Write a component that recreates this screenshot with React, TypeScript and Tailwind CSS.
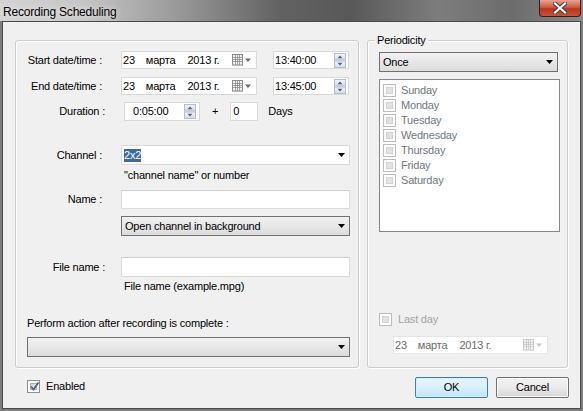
import React from "react";

const FONT = "font-['Liberation_Sans',Arial,sans-serif] text-[11px] tracking-[-0.2px]";

function Spinner() {
  return (
    <svg width="12" height="15" viewBox="0 0 12 15">
      <defs>
        <linearGradient id="spg" x1="0" y1="0" x2="0" y2="1">
          <stop offset="0" stopColor="#f4f7fb" />
          <stop offset="1" stopColor="#d3dbe6" />
        </linearGradient>
      </defs>
      <rect x="0.5" y="0.5" width="11" height="6.5" fill="url(#spg)" stroke="#b5bdca" />
      <rect x="0.5" y="8" width="11" height="6.5" fill="url(#spg)" stroke="#b5bdca" />
      <path d="M3.5 5.2 L6 2.6 L8.5 5.2Z" fill="#4f6386" />
      <path d="M3.5 9.8 L6 12.4 L8.5 9.8Z" fill="#4f6386" />
    </svg>
  );
}

function CalendarIcon({ disabled }: { disabled?: boolean }) {
  const c = disabled ? "#c8c8c8" : "#8c8c8c";
  const a = disabled ? "#c4c8ce" : "#5d6f8c";
  return (
    <svg width="20" height="12" viewBox="0 0 20 12">
      <rect x="0.5" y="0.5" width="10" height="10.5" fill="#f4f4f4" stroke={c} />
      <path d="M1 3.5H10M1 5.5H10M1 7.5H10M3.5 1V11M5.5 1V11M7.5 1V11" stroke={c} strokeWidth="0.8" />
      <rect x="1" y="11" width="10" height="1" fill={disabled ? "#e0e0e0" : "#b9b9b9"} />
      <path d="M13 4.5 L19 4.5 L16 8Z" fill={a} />
    </svg>
  );
}

function Arrow() {
  return (
    <svg width="7" height="4" viewBox="0 0 7 4">
      <path d="M0 0H7L3.5 4Z" fill="#000" />
    </svg>
  );
}

function DatePicker({ disabled, wide }: { disabled?: boolean; wide?: boolean }) {
  return (
    <div
      className={`h-[18px] ${wide ? "w-[155px]" : "w-[136px]"} bg-white border flex items-center ${
        disabled ? "border-[#e6e6e6] text-[#6d6d6d]" : "border-[#d9d9d9] text-black"
      }`}
    >
      <span className="pl-[1px]">23</span>
      <span className="ml-[11px]">марта</span>
      <span className="ml-[12px]">2013 г.</span>
      <span className="ml-auto mr-[4px] flex items-center">
        <CalendarIcon disabled={disabled} />
      </span>
    </div>
  );
}

function TimeBox({ value }: { value: string }) {
  return (
    <div className="h-[18px] w-[76px] bg-white border border-[#d9d9d9] flex items-center pl-[1px] pr-[2px]">
      <span>{value}</span>
      <span className="ml-auto flex">
        <Spinner />
      </span>
    </div>
  );
}

function TextBox({ h = 20, className = "" }: { h?: number; className?: string }) {
  return (
    <div
      className={`bg-white border border-[#dadada] border-t-[#cfcfcf] ${className}`}
      style={{ height: h }}
    />
  );
}

function Select({ text, className = "" }: { text?: string; className?: string }) {
  return (
    <div
      className={`h-[20px] border border-[#707070] bg-gradient-to-b from-[#f2f2f2] to-[#dcdcdc] flex items-center pl-[3px] pr-[4px] ${className}`}
    >
      <span>{text}</span>
      <span className="ml-auto flex">
        <Arrow />
      </span>
    </div>
  );
}

function CheckBox({ checked, disabled }: { checked?: boolean; disabled?: boolean }) {
  return (
    <div
      className={`w-[13px] h-[13px] border p-[2px] bg-white ${
        disabled ? "border-[#bdbdbd]" : "border-[#8e8f8f]"
      }`}
    >
      <div
        className={`w-full h-full relative ${
          disabled
            ? "bg-[#e2e2e2] border border-[#d4d4d4]"
            : "bg-gradient-to-br from-[#cfcfcf] to-[#f4f4f4] border border-[#b0b0b0]"
        }`}
      >
        {checked && (
          <svg className="absolute -left-[2px] -top-[3px]" width="11" height="11" viewBox="0 0 11 11">
            <path d="M2 5.5 L4.5 8.5 L9.5 1.5" stroke="#4a5e93" strokeWidth="1.8" fill="none" />
          </svg>
        )}
      </div>
    </div>
  );
}

function Label({ children }: { children: React.ReactNode }) {
  return <div className="w-[87px] text-right shrink-0 pr-[1px]">{children}</div>;
}

const days = ["Sunday", "Monday", "Tuesday", "Wednesday", "Thursday", "Friday", "Saturday"];

export default function App() {
  return (
    <div className={`w-[583px] h-[411px] flex flex-col bg-[#7d7d7d] ${FONT}`}>
      {/* Title bar */}
      <div className="h-[21px] shrink-0 flex items-start bg-[linear-gradient(90deg,#d4d4d4_0%,#c6c6c6_14%,#9a9a9a_30%,#626262_48%,#585858_60%,#7d7d7d_75%,#6c6c6c_88%,#8a8a8a_100%)]">
        <span className="pl-[3px] pt-[3px] text-[12px] text-black [text-shadow:0_0_6px_#ffffff]">
          Recording Scheduling
        </span>
        <div className="ml-auto mr-[2px] w-[42px] h-[17px] rounded-b-[4px] border border-t-0 border-[#3f1a14] bg-[linear-gradient(180deg,#e8a493_0%,#cd5c44_45%,#b7361f_55%,#c9513a_100%)] flex items-center justify-center">
          <svg width="14" height="12" viewBox="0 0 14 12">
            <path d="M2 1.5 L12 10.5 M12 1.5 L2 10.5" stroke="#3a3a3a" strokeWidth="4" strokeLinecap="square" />
            <path d="M2 1.5 L12 10.5 M12 1.5 L2 10.5" stroke="#ffffff" strokeWidth="2.2" strokeLinecap="square" />
          </svg>
        </div>
      </div>

      {/* Client area */}
      <div className="flex-1 mx-[2px] mb-[2px] border border-[#4a4a4a] bg-[#f0f0f0] pl-[12px] pr-[12px] pt-[18px] flex flex-col">
        <div className="flex gap-[8px]">
          {/* Left group */}
          <div className="w-[344px] h-[328px] border border-[#cdcdcd] rounded-[3px] shadow-[inset_1px_1px_0_#ffffff,1px_1px_0_#ffffff] pt-[10px] flex flex-col">
            <div className="flex items-center h-[18px]">
              <Label>Start date/time :</Label>
              <div className="ml-[18px]">
                <DatePicker />
              </div>
              <div className="ml-[16px]">
                <TimeBox value="13:40:00" />
              </div>
            </div>
            <div className="flex items-center h-[18px] mt-[8px]">
              <Label>End date/time :</Label>
              <div className="ml-[18px]">
                <DatePicker />
              </div>
              <div className="ml-[16px]">
                <TimeBox value="13:45:00" />
              </div>
            </div>
            <div className="flex items-center h-[19px] mt-[7px]">
              <div className="w-[89px] text-right shrink-0">Duration :</div>
              <div className="ml-[19px] h-[19px] w-[76px] bg-white border border-[#d9d9d9] flex items-center pl-[8px] pr-[3px]">
                <span>0:05:00</span>
                <span className="ml-auto flex">
                  <Spinner />
                </span>
              </div>
              <span className="ml-[12px]">+</span>
              <div className="ml-[12px] h-[19px] w-[28px] bg-white border border-[#d9d9d9] flex items-center pl-[2px]">
                0
              </div>
              <span className="ml-[10px]">Days</span>
            </div>

            <div className="flex items-center h-[20px] mt-[24px]">
              <Label>Channel :</Label>
              <div className="ml-[18px] w-[229px] h-[20px] bg-white border border-[#dadada] flex items-center pl-[2px] pr-[4px]">
                <span className="bg-[#3d6aa0] text-white leading-[13px]">2x2</span>
                <span className="ml-auto flex">
                  <Arrow />
                </span>
              </div>
            </div>
            <div className="h-[12px] leading-[12px] mt-[4px] pl-[108px]">"channel name" or number</div>

            <div className="flex items-center h-[19px] mt-[9px]">
              <Label>Name :</Label>
              <TextBox h={19} className="ml-[18px] w-[229px]" />
            </div>
            <div className="mt-[7px] pl-[105px]">
              <Select text="Open channel in background" className="w-[229px]" />
            </div>

            <div className="flex items-center h-[20px] mt-[21px]">
              <div className="w-[89px] text-right shrink-0">File name :</div>
              <TextBox className="ml-[16px] w-[229px]" />
            </div>
            <div className="h-[12px] leading-[12px] mt-[3px] pl-[108px]">File name (example.mpg)</div>

            <div className="h-[12px] leading-[12px] mt-[25px] pl-[11px]">
              Perform action after recording is complete :
            </div>
            <div className="mt-[8px] pl-[11px]">
              <Select className="w-[323px]" />
            </div>
          </div>

          {/* Right group */}
          <div className="relative w-[201px] h-[328px] border border-[#cdcdcd] rounded-[3px] shadow-[inset_1px_1px_0_#ffffff,1px_1px_0_#ffffff] pt-[11px] pl-[11px] pr-[7px] pb-[13px] flex flex-col">
            <span className="absolute left-[7px] -top-[7px] px-[2px] bg-[#f0f0f0] leading-[13px]">Periodicity</span>
            <Select text="Once" className="w-[179px]" />
            <div className="mt-[7px] h-[153px] w-[181px] bg-white border border-[#828790] pt-[3px] pl-[3px]">
              {days.map((d) => (
                <div key={d} className="h-[15px] flex items-center gap-[5px]">
                  <CheckBox disabled />
                  <span className="text-[#6f7782]">{d}</span>
                </div>
              ))}
            </div>
            <div className="flex-1" />
            <div className="flex items-center gap-[6px] h-[13px]">
              <CheckBox disabled />
              <span className="text-[#a3a3a3]">Last day</span>
            </div>
            <div className="mt-[10px] pl-[14px]">
              <DatePicker disabled wide />
            </div>
          </div>
        </div>

        {/* Bottom row */}
        <div className="flex items-center mt-[9px]">
          <div className="flex items-center gap-[6px] ml-[12px] -mt-[2px]">
            <CheckBox checked />
            <span>Enabled</span>
          </div>
          <div className="ml-auto flex gap-[8px] mr-[-1px]">
            <button className="w-[73px] h-[21px] border border-[#3c7fb1] rounded-[2px] bg-gradient-to-b from-[#eaf6fd] via-[#d9f0fc] to-[#bee6fd] shadow-[inset_0_0_0_1px_#d8ecfa] text-black">
              OK
            </button>
            <button className="w-[73px] h-[21px] border border-[#707070] rounded-[2px] bg-gradient-to-b from-[#f2f2f2] via-[#ebebeb] to-[#d6d6d6] shadow-[inset_0_0_0_1px_#fcfcfc] text-black">
              Cancel
            </button>
          </div>
        </div>
      </div>
    </div>
  );
}
